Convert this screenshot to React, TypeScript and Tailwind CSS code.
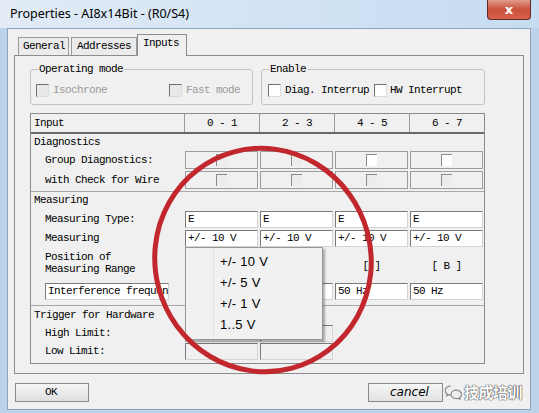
import React from "react";

const mono = "font-['Liberation_Mono',monospace] text-[11px] tracking-[-0.6px] text-black";
const cols = "grid grid-cols-[153px_75px_75px_75px_75px]";

function Check({ white = true }: { white?: boolean }) {
  return (
    <span
      className={`inline-block w-[13px] h-[13px] border border-t-[#707070] border-l-[#707070] border-r-[#dcdcdc] border-b-[#dcdcdc] ${
        white ? "bg-white" : "bg-[#e9e9e9]"
      }`}
    />
  );
}

function CheckCell({ white = false }: { white?: boolean }) {
  return (
    <div className="ml-[1px] w-[73px] h-[18px] border border-[#9c9c9c] flex items-center justify-center">
      <span
        className={`w-[11px] h-[12px] border-l border-t border-[#8a8a8a] ${white ? "bg-white" : "bg-[#ececec]"}`}
      />
    </div>
  );
}

function Field({ text = "", gray = false }: { text?: string; gray?: boolean }) {
  return (
    <div
      className={`ml-[1px] w-[73px] h-[17px] border border-t-[#7a7a7a] border-l-[#7a7a7a] border-r-[#d4d4d4] border-b-[#d4d4d4] flex items-center pl-[2px] ${
        gray ? "bg-[#f0f0f0]" : "bg-white"
      }`}
    >
      {text}
    </div>
  );
}

export default function App() {
  const ranges = ["+/- 10 V", "+/- 5 V", "+/- 1 V", "1..5 V"];

  return (
    <div className="relative w-[539px] h-[413px] overflow-hidden bg-[#bcd3ea]">
      {/* title bar */}
      <div className="h-[28px] flex items-center pl-[10px] bg-linear-to-r from-[#e2ebf6] via-[#d2e3f4] to-[#c6dcf1]">
        <span className="font-['Noto_Sans',sans-serif] text-[12.5px] text-black">
          Properties - AI8x14Bit - (R0/S4)
        </span>
      </div>
      <div className="absolute left-[487px] top-0 w-[44px] h-[20px] rounded-b-[4px] border border-t-0 border-[#5e2a24] bg-linear-to-b from-[#e09a8c] via-[#c8503c] to-[#d8614a] flex items-center justify-center">
        <span className="font-['DejaVu_Sans',sans-serif] text-[13px] font-bold text-white leading-none">x</span>
      </div>

      {/* client area */}
      <div className={`ml-[7px] mr-[8px] h-[382px] bg-[#f0f0f0] border border-[#8ea4bc] px-[6px] ${mono}`}>
        {/* tabs */}
        <div className="flex items-end h-[26px] pl-[4px]">
          <div className="w-[51px] h-[18px] mr-[2px] border border-b-0 border-[#9a9a9a] bg-[#ebebeb] pl-[4px] leading-[17px]">
            General
          </div>
          <div className="w-[66px] h-[18px] border border-b-0 border-[#9a9a9a] bg-[#ebebeb] pl-[5px] leading-[17px]">
            Addresses
          </div>
          <div className="relative z-10 -mb-[1px] w-[50px] h-[22px] border border-b-0 border-[#8c8c8c] bg-[#f0f0f0] pl-[5px] leading-[17px]">
            Inputs
          </div>
        </div>

        {/* tab panel */}
        <div className="w-[510px] h-[319px] border border-[#8c8c8c] bg-[#f0f0f0] pl-[15px]">
          <div className="flex gap-[8px] mt-[7px]">
            <fieldset className="w-[223px] h-[42px] border border-[#c3c3c3] rounded-[3px] px-[5px]">
              <legend className="ml-[2px] px-[1px] leading-[12px]">Operating mode</legend>
              <div className="flex items-center mt-[7px] text-[#9a9a9a]">
                <Check white={false} />
                <span className="ml-[4px] w-[116px]">Isochrone</span>
                <Check white={false} />
                <span className="ml-[4px]">Fast mode</span>
              </div>
            </fieldset>
            <fieldset className="w-[224px] h-[42px] border border-[#c3c3c3] rounded-[3px] px-[6px]">
              <legend className="ml-[1px] px-[1px] leading-[12px]">Enable</legend>
              <div className="flex items-center mt-[7px]">
                <Check />
                <span className="ml-[4px] w-[89px]">Diag. Interrup</span>
                <Check />
                <span className="ml-[3px]">HW Interrupt</span>
              </div>
            </fieldset>
          </div>

          {/* table */}
          <div className="mt-[8px] w-[455px] h-[251px] border border-[#8a8a8a]">
            <div className={`${cols} h-[20px] border-b-2 border-[#6a6a6a] items-stretch`}>
              <div className="pl-[3px] flex items-center">Input</div>
              <div className="border-l border-[#9a9a9a] flex items-center justify-center">0 - 1</div>
              <div className="border-l border-[#9a9a9a] flex items-center justify-center">2 - 3</div>
              <div className="border-l border-[#9a9a9a] flex items-center justify-center">4 - 5</div>
              <div className="border-l border-[#9a9a9a] flex items-center justify-center">6 - 7</div>
            </div>

            {/* diagnostics */}
            <div className="h-[57px]">
              <div className="h-[17px] pl-[3px] flex items-center">Diagnostics</div>
              <div className={`${cols} h-[20px] items-start`}>
                <div className="pl-[14px] leading-[18px]">Group Diagnostics:</div>
                <CheckCell />
                <CheckCell />
                <CheckCell white />
                <CheckCell white />
              </div>
              <div className={`${cols} h-[20px] items-start`}>
                <div className="pl-[14px] leading-[18px]">with Check for Wire</div>
                <CheckCell />
                <CheckCell />
                <CheckCell />
                <CheckCell />
              </div>
            </div>

            {/* measuring */}
            <div className="h-[114px] border-t border-[#a8a8a8]">
              <div className="h-[17px] pl-[3px] flex items-center">Measuring</div>
              <div className={`${cols} h-[20px] items-center`}>
                <div className="pl-[14px]">Measuring Type:</div>
                <Field text="E" />
                <Field text="E" />
                <Field text="E" />
                <Field text="E" />
              </div>
              <div className={`${cols} h-[19px] items-center`}>
                <div className="pl-[14px]">Measuring</div>
                <Field text="+/- 10 V" />
                <Field text="+/- 10 V" />
                <Field text="+/- 10 V" />
                <Field text="+/- 10 V" />
              </div>
              <div className={`${cols} h-[29px] items-center`}>
                <div className="pl-[14px] leading-[12px]">
                  Position of
                  <br />
                  Measuring Range
                </div>
                <div />
                <div />
                <div className="text-center pt-[8px]">[ ]</div>
                <div className="text-center pt-[8px]">[ B ]</div>
              </div>
              <div className={`${cols} h-[28px] items-center`}>
                <div className="pl-[14px]">
                  <div className="w-[124px] h-[17px] bg-white border border-t-[#7a7a7a] border-l-[#7a7a7a] border-r-[#d4d4d4] border-b-[#d4d4d4] pl-[2px] leading-[15px] whitespace-nowrap">
                    Interference frequen
                  </div>
                </div>
                <Field text="50 Hz" />
                <Field text="50 Hz" />
                <Field text="50 Hz" />
                <Field text="50 Hz" />
              </div>
            </div>

            {/* trigger */}
            <div className="border-t border-[#a8a8a8]">
              <div className="h-[18px] pl-[3px] flex items-center">Trigger for Hardware</div>
              <div className={`${cols} h-[18px] items-center`}>
                <div className="pl-[14px]">High Limit:</div>
                <Field gray />
                <Field gray />
              </div>
              <div className={`${cols} h-[19px] items-center`}>
                <div className="pl-[14px]">Low Limit:</div>
                <Field gray />
                <Field gray />
              </div>
            </div>
          </div>
        </div>

        {/* buttons */}
        <div className="flex items-center mt-[7px]">
          <div className="w-[74px] h-[19px] ml-[1px] border border-[#8a8a8a] bg-linear-to-b from-[#f6f6f6] to-[#dedede] pl-[29px] leading-[17px]">
            OK
          </div>
          <div className="ml-[279px] w-[75px] h-[19px] border border-[#8a8a8a] bg-linear-to-b from-[#f6f6f6] to-[#e2e2e2] pl-[21px] font-['DejaVu_Sans',sans-serif] italic text-[12px] tracking-normal leading-[17px]">
            cancel
          </div>
          <div className="flex items-center ml-[1px]">
            <svg width="19" height="17" viewBox="0 0 19 17" fill="none" stroke="#8a8a8a" strokeWidth="1.2">
              <path d="M7 2c-3.3 0-5.8 2-5.8 4.6 0 1.4.7 2.6 1.9 3.5l-.5 1.7 2.1-1.1c.7.2 1.5.3 2.3.3" />
              <path d="M12.3 6.2c-3 0-5.3 1.9-5.3 4.2s2.3 4.2 5.3 4.2c.6 0 1.2-.1 1.8-.3l1.8 1-.4-1.5c1.2-.8 2-2 2-3.4 0-2.3-2.3-4.2-5.2-4.2z" />
            </svg>
            <span className="ml-[1px] font-['Noto_Sans_CJK_SC',sans-serif] text-[15px] tracking-[-0.5px] text-white font-bold [text-shadow:0_0_1px_#444,0_0_1px_#444,0_0_1px_#444]">
              技成培训
            </span>
          </div>
        </div>
      </div>

      {/* drop-down list */}
      <div className="absolute left-[185px] top-[247px] w-[138px] h-[93px] bg-[#f1f1f1] border border-[#979797] shadow-[2px_2px_2px_rgba(0,0,0,0.3)] flex">
        <div className="w-[28px] border-r border-[#e0e0e0]" />
        <div className="pt-[3px] pl-[6px]">
          {ranges.map((r) => (
            <div key={r} className="h-[21px] flex items-center font-['Liberation_Sans',sans-serif] text-[13px] tracking-[0.3px] text-black">
              {r}
            </div>
          ))}
        </div>
      </div>

      {/* red annotation circle */}
      <svg className="absolute left-0 top-0 pointer-events-none" width="539" height="413" viewBox="0 0 539 413">
        <ellipse cx="263" cy="260" rx="108" ry="112" fill="none" stroke="#c1272d" strokeWidth="5" transform="rotate(-15 263 260)" />
      </svg>
    </div>
  );
}
